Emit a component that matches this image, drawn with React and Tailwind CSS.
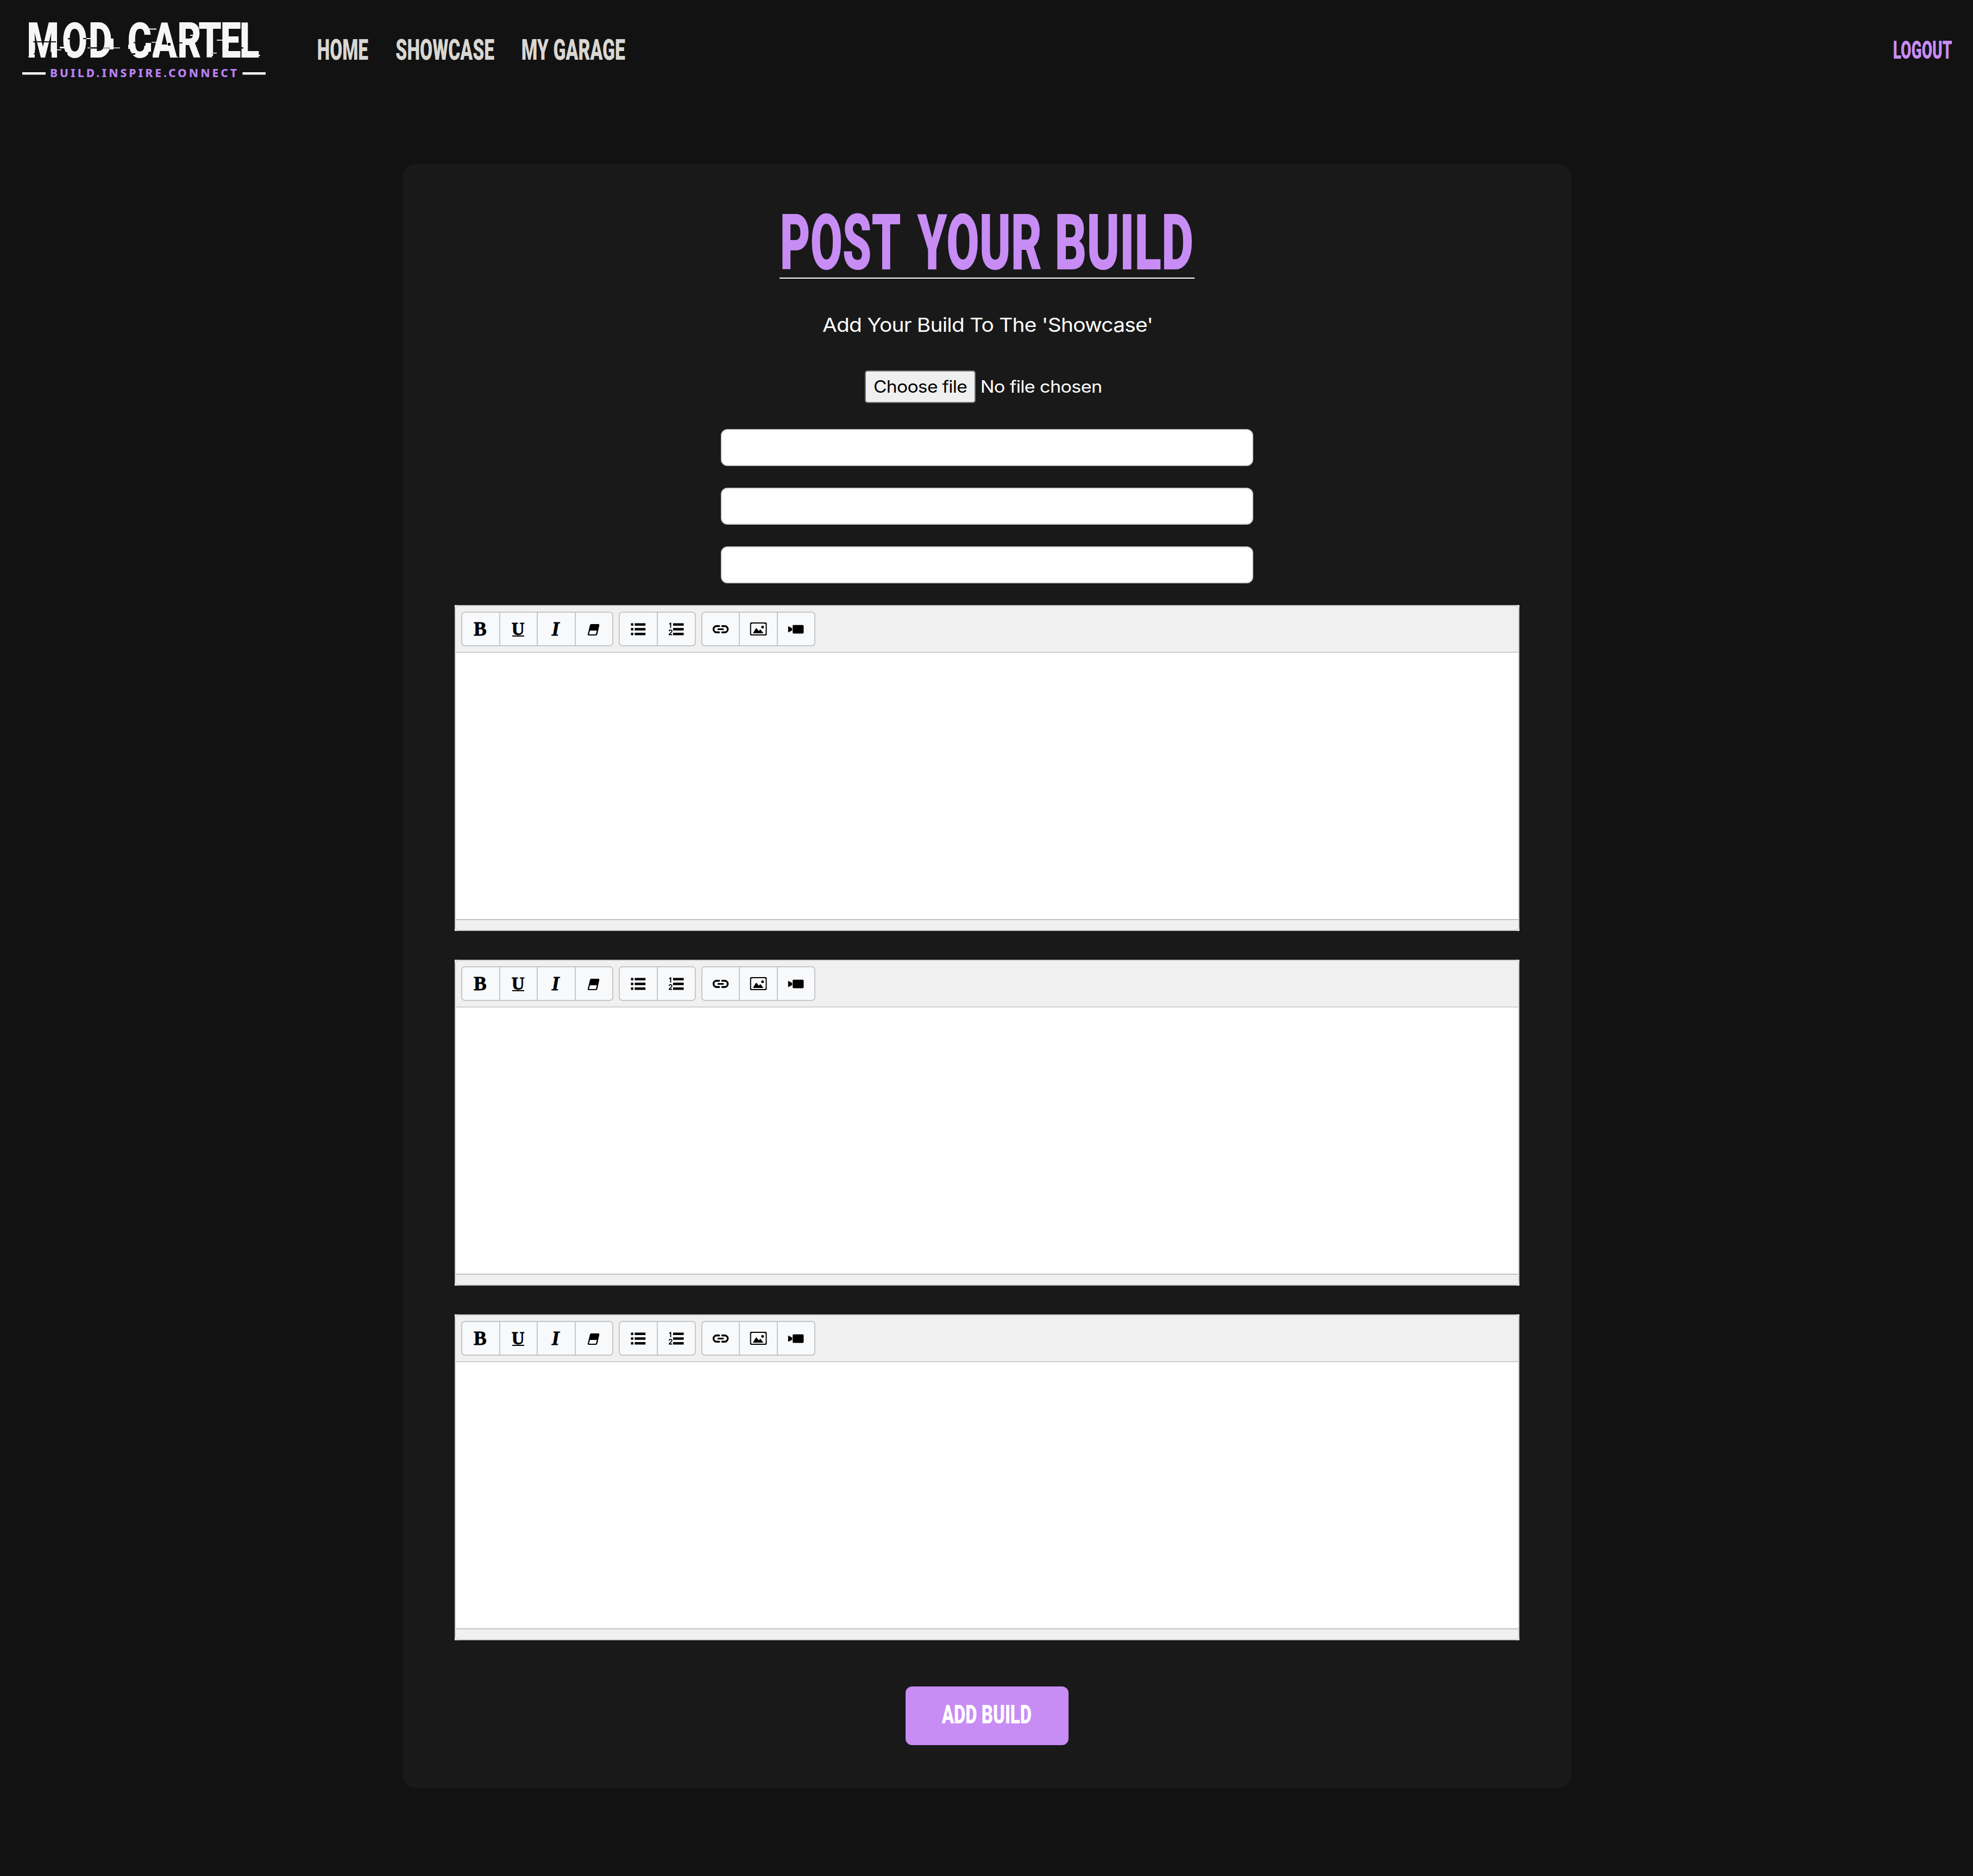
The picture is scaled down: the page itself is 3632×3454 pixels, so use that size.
import { useLayoutEffect, useRef } from "react";

const CONDENSED = "font-['Roboto',sans-serif] font-black";
const BODY = "font-['Inter',sans-serif] font-[370] tracking-[-0.02em]";

// Stretches one run of text so that its ink fills the width of its box.
function Fit({ className, children }) {
  const box = useRef(null);
  const run = useRef(null);
  useLayoutEffect(() => {
    const cs = getComputedStyle(run.current);
    const ctx = document.createElement("canvas").getContext("2d");
    ctx.font = `${cs.fontWeight} ${cs.fontSize} ${cs.fontFamily}`;
    ctx.letterSpacing = cs.letterSpacing === "normal" ? "0px" : cs.letterSpacing;
    const m = ctx.measureText(children);
    const left = -m.actualBoundingBoxLeft;
    const scale = box.current.clientWidth / (m.actualBoundingBoxRight - left);
    run.current.style.transform = `translateX(${-left * scale}px) scaleX(${scale})`;
  }, [children]);
  return (
    <span ref={box} className={`block shrink-0 whitespace-nowrap ${className}`}>
      <span ref={run} className="inline-block w-0 origin-left align-top">
        {children}
      </span>
    </span>
  );
}

function Logo() {
  const dark = [
    [61, 76, 42, 2], [125, 70, 6, 2.5], [153, 70, 8, 2], [163, 87, 57, 2.5],
    [246, 77.5, 6, 2], [309, 79, 5, 5], [326, 78, 10, 2], [349, 64, 10, 2],
    [62, 98, 3, 2], [243, 98, 6, 3], [389, 97, 4, 2], [420, 90, 5, 2],
    [444, 87, 4, 2.5], [50, 90, 3, 17], [117, 96, 7, 11],
    [154, 98, 6, 9], [201, 93, 9, 14], [390, 103, 5, 2],
    [64, 92, 3, 15], [86, 96, 9, 11], [236, 96, 6, 12], [273, 96, 8, 12],
  ];
  const light = [
    [110, 86, 9, 3], [159, 70, 8, 2], [161, 87.5, 5, 1.5], [190, 87.5, 31, 1.5],
    [272, 52.5, 16, 2], [279, 77, 13, 1.5], [350, 64, 11, 2], [399, 73, 16, 1.8],
    [389, 97, 10, 1.5], [103, 91, 10, 1.5], [52, 104, 11, 1.3], [314, 104.5, 14, 1.3],
    [470, 101, 9, 2], [236, 82, 5, 8], [461, 96, 13, 10], [202, 71, 7, 20],
    [268, 79, 10, 16],
  ];
  return (
    <svg className="h-[160px] w-[460px]" viewBox="36 10 460 160" fill="#f6f6f6">
      <text
        transform="scale(.75 1)"
        x="66 152.5 217.500" y="106"
        fontFamily="Roboto, sans-serif" fontWeight="900" fontSize="90"
      >
        MOD
      </text>
      <text
        transform="scale(.75 1)"
        x="313 373 435.500 487 541 588" y="106"
        fontFamily="Roboto, sans-serif" fontWeight="900" fontSize="90"
      >
        CARTEL
      </text>
      {dark.map(([x, y, w, h]) => (
        <rect key={`d${x}-${y}`} x={x} y={y} width={w} height={h} fill="#121212" />
      ))}
      {light.map(([x, y, w, h]) => (
        <rect key={`l${x}-${y}`} x={x} y={y} width={w} height={h} />
      ))}
      <rect x="41" y="133" width="43" height="4.5" />
      <rect x="446.5" y="133" width="42.5" height="4.5" />
      <text
        x="92" y="142" fill="#b980f2" fontFamily="Noto Sans, sans-serif" fontWeight="800"
        fontSize="21" textLength="344" lengthAdjust="spacing"
      >
        BUILD.INSPIRE.CONNECT
      </text>
    </svg>
  );
}

function Eraser() {
  return (
    <svg className="h-7 w-6" viewBox="0 0 24 28">
      <path d="M7.6 5h12.6a2 2 0 0 1 2 2.4l-3.6 16.4a2.8 2.8 0 0 1-2.6 2.2H3a2 2 0 0 1-2-2.4L5 7.2A2.8 2.8 0 0 1 7.6 5z" />
      <path d="M5.1 17h12.6l-1.5 6a1 1 0 0 1-1 .9H4.1a.8.8 0 0 1-.8-1z" fill="#f8f9fb" />
    </svg>
  );
}

function Bullets() {
  return (
    <svg className="h-6 w-7" viewBox="0 0 28 24">
      {[1.6, 10.3, 19].map((y) => (
        <path key={y} d={`M.5 ${y}h4.3v4.4H.5zM7.4 ${y}h19.8v4.4H7.4z`} />
      ))}
    </svg>
  );
}

function Numbers() {
  return (
    <svg className="h-6 w-7" viewBox="0 0 28 24">
      {[1.6, 10.3, 19].map((y) => (
        <path key={y} d={`M8 ${y}h19.6v4.4H8z`} />
      ))}
      <path d="M1 3.2 3.6 1.4V10" fill="none" stroke="#000" strokeWidth="1.9" />
      <path d="M.7 16.2c0-3 5.2-3 5.2 0 0 2.4-4.6 3.8-5 6.3h5.4" fill="none" stroke="#000" strokeWidth="1.8" />
    </svg>
  );
}

function Link() {
  return (
    <svg className="h-6 w-8" viewBox="0 0 32 24" fill="none" stroke="#000" strokeLinecap="round">
      <path d="M12.8 6.8H8.2a5.7 5.7 0 0 0 0 11.4h4.6M18.4 6.8H23a5.7 5.7 0 0 1 0 11.4h-4.6" strokeWidth="3.4" />
      <path d="M11.2 12.5h8.8" strokeWidth="3" />
    </svg>
  );
}

function Picture() {
  return (
    <svg className="h-6 w-8" viewBox="0 0 32 24">
      <rect x="1.7" y="1.1" width="28.8" height="21.9" rx="1.2" fill="none" stroke="#000" strokeWidth="2" />
      <path d="M2.5 2h3a3 3 0 0 0-3 3zM29.6 2h-3a3 3 0 0 1 3 3zM2.5 22.2h3a3 3 0 0 1-3-3zM29.6 22.2h-3a3 3 0 0 0 3-3z" />
      <circle cx="23.8" cy="8.4" r="2.5" />
      <path d="M6 20 11.4 11q.8-1.2 1.6 0l3.8 4.8 2.2-2.4q.7-.8 1.4 0l5 6.6z" />
    </svg>
  );
}

function Video() {
  return (
    <svg className="h-6 w-8" viewBox="0 0 32 24">
      <rect x="10.2" y="4.7" width="20.2" height="15.8" rx="1.8" />
      <path d="M2.4 7.1 9.2 10.7v4L2.4 18.3q-.6.2-.6-.6V7.7q0-.8.6-.6z" />
    </svg>
  );
}

const SERIF = "font-['Liberation_Serif',serif] font-bold [-webkit-text-stroke:0.8px_#000]";
const groups = [
  {
    box: "w-[280px]",
    items: [
      <span key="b" className={`${SERIF} mr-[2px] text-[35.5px] leading-[62px]`}>B</span>,
      <span key="u" className="mr-[1px] flex flex-col items-center">
        <span className={`${SERIF} text-[33px] leading-[26px]`}>U</span>
        <span className="-mt-[1px] h-[2px] w-[22px] bg-black" />
      </span>,
      <span key="i" className={`${SERIF} mr-[2px] text-[35.5px] leading-[62px] italic`}>I</span>,
      <Eraser key="e" />,
    ],
  },
  { box: "w-[142px]", items: [<Bullets key="ul" />, <Numbers key="ol" />] },
  { box: "w-[210px]", items: [<Link key="a" />, <Picture key="p" />, <Video key="v" />] },
];

function Editor() {
  return (
    <div className="h-[600px] w-[1960px] bg-white">
      <div className="flex h-full flex-col overflow-hidden rounded-[8px] border-2 border-[#cbcbcb] bg-white">
        <div className="flex h-[86px] shrink-0 gap-[10px] border-b-2 border-[#d0d0d0] bg-[#f0f0f0] pt-[10px] pl-[10px]">
          {groups.map((g) => (
            <div
              key={g.box}
              className={`flex h-[64px] divide-x-2 divide-[#c5c7c9] overflow-hidden rounded-[7px] border-2 border-[#c5c7c9] bg-[#f8f9fb] ${g.box}`}
            >
              {g.items.map((icon, i) => (
                <button key={i} type="button" className="flex flex-1 items-center justify-center">
                  {icon}
                </button>
              ))}
            </div>
          ))}
        </div>
        <div className="flex-1" />
        <div className="h-[20px] shrink-0 border-t-2 border-[#c2c2c2] bg-[#f0f0f0]" />
      </div>
    </div>
  );
}

export default function App() {
  return (
    <div className="h-[3454px] w-full overflow-hidden bg-[#121212]">
      <header className="flex h-[180px] items-center pr-[39px] pl-[36px]">
        <Logo />
        <nav className={`mt-[4px] ml-[89px] flex gap-[51px] text-[53.5px] leading-[60px] text-[#d9d7d3] ${CONDENSED}`}>
          <Fit className="w-[93px]">HOME</Fit>
          <Fit className="w-[181px]">SHOWCASE</Fit>
          <Fit className="w-[190px]">MY GARAGE</Fit>
        </nav>
        <div className={`mt-[6px] ml-auto text-[45.5px] leading-[60px] text-[#c88cf5] ${CONDENSED}`}>
          <Fit className="w-[107px]">LOGOUT</Fit>
        </div>
      </header>

      <main className="mt-[122px] ml-[741px] flex h-[2990px] w-[2152px] flex-col items-center rounded-[24px] bg-[#191919]">
        <h1
          className={`mt-[74px] flex h-[137px] w-[764px] justify-between border-b-2 border-white px-[5px] text-[143.5px] leading-[142px] text-[#c88cf5] ${CONDENSED}`}
        >
          <Fit className="w-[217px]">POST</Fit>
          <Fit className="w-[228px]">YOUR</Fit>
          <Fit className="w-[248px]">BUILD</Fit>
        </h1>
        <p className={`mt-[56px] -ml-[2px] text-[35.5px] leading-[60px] text-white ${BODY}`}>
          <Fit className="w-[605px]">Add Your Build To The 'Showcase'</Fit>
        </p>
        <div className={`mt-[53px] flex h-[60px] w-[450px] items-center gap-[11px] text-[30.5px] leading-[56px] text-white ${BODY}`}>
          <button type="button" className="flex h-[60px] w-[204px] justify-center rounded-[5px] border-2 border-[#767676] bg-[#efefef] tracking-[-0.02em] text-black">
            <Fit className="w-[171px] text-left">Choose file</Fit>
          </button>
          <Fit className="w-[220px]">No file chosen</Fit>
        </div>
        <div className="mt-[48px] flex flex-col gap-[40px]">
          {[0, 1, 2].map((i) => (
            <input key={i} className="h-[68px] w-[980px] rounded-[12px] border-2 border-[#ced4da] bg-white px-6" />
          ))}
        </div>
        <div className="mt-[40px] flex flex-col gap-[53px]">
          <Editor />
          <Editor />
          <Editor />
        </div>
        <button
          type="button"
          className={`mt-[85px] flex h-[108px] w-[300px] justify-center rounded-[12px] bg-[#c88cf5] text-left text-[48.5px] leading-[103px] text-white ${CONDENSED}`}
        >
          <Fit className="mr-[3px] w-[165px]">ADD BUILD</Fit>
        </button>
      </main>
    </div>
  );
}
